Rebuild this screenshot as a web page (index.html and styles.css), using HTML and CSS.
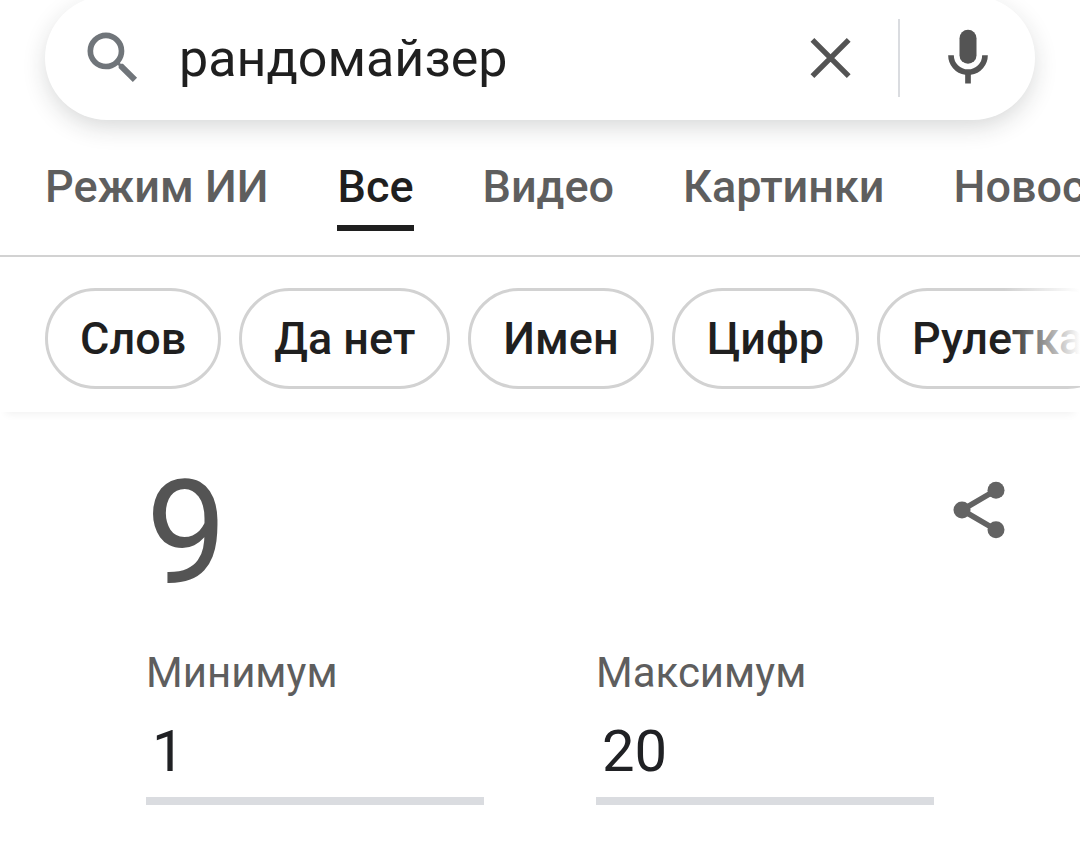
FILE: index.html
```html
<!DOCTYPE html>
<html lang="ru">
<head>
    <meta charset="UTF-8">
    <meta name="viewport" content="width=device-width, initial-scale=1">
    <title>рандомайзер</title>
    <link rel="stylesheet" href="styles.css">
</head>
<body>
    <header class="header">
        <form class="search-box" role="search">
            <button class="icon-button" type="submit" aria-label="Поиск">
                <svg class="icon icon-search" viewBox="0 0 24 24"><path d="M15.5 14h-.79l-.28-.27A6.47 6.47 0 0 0 16 9.5 6.5 6.5 0 1 0 9.5 16c1.61 0 3.09-.59 4.23-1.57l.27.28v.79l5 4.99L20.49 19l-4.99-5zm-6 0a4.5 4.5 0 1 1 0-9 4.5 4.5 0 0 1 0 9z"/></svg>
            </button>
            <input class="search-input" type="text" value="рандомайзер" aria-label="Запрос">
            <button class="icon-button" type="reset" aria-label="Очистить">
                <svg class="icon" viewBox="0 0 24 24"><path d="M5.8 5.6l12.8 12.8M18.6 5.6L5.8 18.4" fill="none" stroke="currentColor" stroke-width="1.9"/></svg>
            </button>
            <span class="divider"></span>
            <button class="icon-button" type="button" aria-label="Голосовой поиск">
                <svg class="icon" viewBox="0 0 24 24"><rect x="9" y="2" width="6" height="12" rx="3"/><path d="M17 11a5 5 0 0 1-10 0H5a7 7 0 0 0 6 6.93V21h2v-3.07A7 7 0 0 0 19 11z"/></svg>
            </button>
        </form>

        <nav class="tabs">
            <a class="tab" href="#">Режим ИИ</a>
            <a class="tab active" href="#">Все</a>
            <a class="tab" href="#">Видео</a>
            <a class="tab" href="#">Картинки</a>
            <a class="tab" href="#">Новости</a>
        </nav>

        <div class="chips">
            <a class="chip" href="#">Слов</a>
            <a class="chip" href="#">Да нет</a>
            <a class="chip" href="#">Имен</a>
            <a class="chip" href="#">Цифр</a>
            <a class="chip" href="#">Рулетка</a>
        </div>
    </header>

    <main class="randomizer">
        <div class="result-row">
            <output class="result" for="min max">9</output>
            <button class="icon-button share" type="button" aria-label="Поделиться">
                <svg class="icon" viewBox="0 0 24 24"><path d="M18 5L6 12l12 7" fill="none" stroke="currentColor" stroke-width="2"/><circle cx="18" cy="5" r="3"/><circle cx="6" cy="12" r="3"/><circle cx="18" cy="19" r="3"/></svg>
            </button>
        </div>
        <div class="fields">
            <div class="field">
                <label for="min">Минимум</label>
                <input id="min" type="text" inputmode="numeric" value="1">
            </div>
            <div class="field">
                <label for="max">Максимум</label>
                <input id="max" type="text" inputmode="numeric" value="20">
            </div>
        </div>
    </main>
</body>
</html>
```
FILE: styles.css
```css
* {
    box-sizing: border-box;
}

body {
    margin: 0;
    background-color: #fff;
    color: #1f1f1f;
    font-family: Roboto, "Liberation Sans", sans-serif;
}

a {
    color: inherit;
    text-decoration: none;
}

input {
    width: 100%;
    min-width: 0;
    border: none;
    outline: none;
    background: none;
    color: inherit;
    font-family: inherit;
}

.icon-button {
    display: flex;
    flex: none;
    padding: 0;
    border: none;
    background: none;
    color: #545454;
    cursor: pointer;
}

.icon {
    width: 68px;
    height: 68px;
    fill: currentColor;
}

.icon-search {
    color: #70757a;
}

/* header */

.header {
    overflow: hidden;
    box-shadow: 0 8px 8px -6px rgba(0, 0, 0, 0.06);
}

.search-box {
    display: flex;
    align-items: center;
    height: 124px;
    margin: -4px 45px 0;
    padding: 0 33px 0 34px;
    border-radius: 62px;
    background-color: #fff;
    box-shadow: 0 8px 26px -3px rgba(32, 33, 36, 0.2);
}

.search-input {
    flex: 1;
    height: 80px;
    margin-left: 32px;
    padding: 0;
    font-size: 52px;
}

.divider {
    flex: none;
    width: 2px;
    height: 78px;
    margin: 0 34px;
    background-color: #dadce0;
}

.tabs {
    display: flex;
    gap: 69px;
    padding: 33px 45px 24px;
    border-bottom: 2px solid #d2d2d2;
    color: #5e5e5e;
    font-size: 45px;
    font-weight: 500;
    line-height: 68px;
    white-space: nowrap;
    overflow: hidden;
}

.tab {
    padding-bottom: 4px;
    border-bottom: 6px solid transparent;
}

.tab.active {
    border-color: #1f1f1f;
    color: #1f1f1f;
}

.chips {
    position: relative;
    display: flex;
    gap: 18px;
    padding: 31px 0 23px 45px;
    overflow: hidden;
}

/* fade over the chips at the right edge */
.chips::after {
    content: "";
    position: absolute;
    top: 0;
    right: 0;
    bottom: 26px;
    width: 76px;
    background: linear-gradient(to right, rgba(255, 255, 255, 0), #fff);
}

.chip {
    flex: none;
    padding: 0 32px;
    border: 3px solid #d2d2d2;
    border-radius: 51px;
    font-size: 45px;
    font-weight: 500;
    line-height: 95px;
}

/* random number */

.randomizer {
    padding: 64px 67px 59px 146px;
}

.result-row {
    display: flex;
    justify-content: space-between;
    align-items: flex-start;
}

.result {
    color: #545454;
    font-size: 144px;
    line-height: 116px;
}

.share {
    color: #636363;
}

.fields {
    display: grid;
    grid-template-columns: 1fr 1fr;
    gap: 112px;
    margin: 50px 79px 0 0;
}

.field {
    display: flex;
    flex-direction: column;
}

.field label {
    color: #5e5e5e;
    font-size: 42px;
    line-height: 62px;
}

.field input {
    height: 101px;
    padding: 0 6px;
    border-bottom: 8px solid #dadce0;
    color: #202124;
    font-size: 58px;
}
```
